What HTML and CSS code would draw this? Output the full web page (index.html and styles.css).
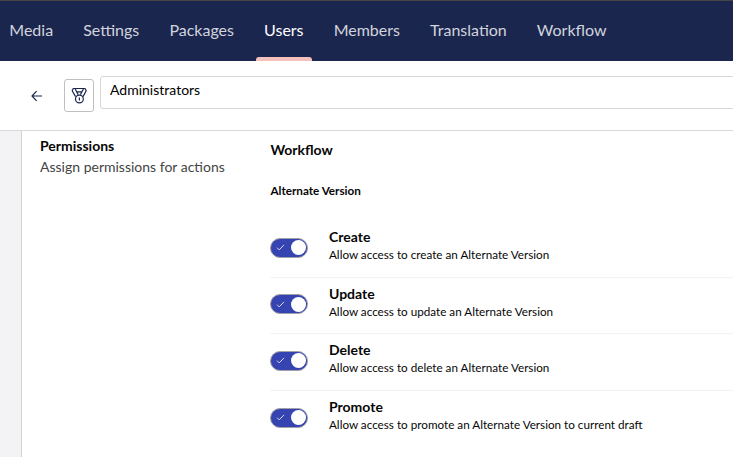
FILE: index.html
```html
<!DOCTYPE html>
<html lang="en">
<head>
<meta charset="utf-8">
<title>Administrators</title>
<link rel="stylesheet" href="styles.css">
</head>
<body>
<nav class="topbar">
  <a class="tab">Media</a>
  <a class="tab">Settings</a>
  <a class="tab">Packages</a>
  <a class="tab active">Users</a>
  <a class="tab">Members</a>
  <a class="tab">Translation</a>
  <a class="tab">Workflow</a>
</nav>
<header class="editor-head">
  <svg class="back" viewBox="0 0 12 12"><path d="M11 6H1.2M5.6 1.2L1 6l4.6 4.8"/></svg>
  <div class="icon-box">
    <svg class="medal" viewBox="0 0 16 18"><path d="M2.2 1.5H14L15.2 3.8 12 9.6M2.2 1.5L1.2 3.8 4.6 9.6M4.2 2l3 5.6M12.4 2L9.4 7.6M5.6 4.8h5.4"/><circle cx="8.4" cy="12" r="3.9"/><path d="M8.4 10.6v2.8"/></svg>
  </div>
  <div class="name-field">Administrators</div>
</header>
<main class="workspace">
  <section class="panel">
    <div class="intro">
      <h2>Permissions</h2>
      <p>Assign permissions for actions</p>
    </div>
    <div class="settings">
      <h3>Workflow</h3>
      <h4>Alternate Version</h4>
      <div class="row">
        <div class="toggle"><svg viewBox="0 0 10 8"><path d="M1 4.2l2.5 2.5L9 1"/></svg><i></i></div>
        <div class="label"><b>Create</b><span>Allow access to create an Alternate Version</span></div>
      </div>
      <div class="row">
        <div class="toggle"><svg viewBox="0 0 10 8"><path d="M1 4.2l2.5 2.5L9 1"/></svg><i></i></div>
        <div class="label"><b>Update</b><span>Allow access to update an Alternate Version</span></div>
      </div>
      <div class="row">
        <div class="toggle"><svg viewBox="0 0 10 8"><path d="M1 4.2l2.5 2.5L9 1"/></svg><i></i></div>
        <div class="label"><b>Delete</b><span>Allow access to delete an Alternate Version</span></div>
      </div>
      <div class="row">
        <div class="toggle"><svg viewBox="0 0 10 8"><path d="M1 4.2l2.5 2.5L9 1"/></svg><i></i></div>
        <div class="label"><b>Promote</b><span>Allow access to promote an Alternate Version to current draft</span></div>
      </div>
    </div>
  </section>
</main>
</body>
</html>
```
FILE: styles.css
```css
* { box-sizing: border-box; }
body {
  margin: 0;
  height: 457px;
  overflow: hidden;
  display: flex;
  flex-direction: column;
  font-family: Lato, "Liberation Sans", sans-serif;
  color: #060606;
  background: #f3f3f5;
}
h2, h3, h4, p { margin: 0; }

.topbar {
  height: 61px;
  flex: none;
  display: flex;
  padding-left: 1.3px;
  background: #1b264f;
  border-top: 1px solid #454545;
}
.tab {
  position: relative;
  height: 60px;
  padding: 0 8px;
  margin-right: 14.1px;
  font-size: 16px;
  line-height: 58px;
  color: #d1d4dc;
}
.tab.active { color: #fff; }
.tab.active::after {
  content: "";
  position: absolute;
  left: 0;
  right: 0;
  bottom: 0;
  height: 4px;
  border-radius: 3px 3px 0 0;
  background: #f5c1bc;
}

.editor-head {
  height: 70px;
  flex: none;
  display: flex;
  align-items: flex-start;
  padding: 15px 0 0 31px;
  background: #fff;
  border-bottom: 1px solid #d8d7d9;
}
.back { width: 12px; height: 12px; margin-top: 14px; }
.back path, .medal path, .medal circle {
  fill: none;
  stroke: #1b264f;
  stroke-width: 1.2;
}
.icon-box {
  width: 30px;
  height: 33px;
  margin: 3px 6px 0 21px;
  display: flex;
  align-items: center;
  justify-content: center;
  border: 1px solid #c0c0c0;
  border-radius: 3px;
}
.medal { width: 16px; height: 18px; }
.name-field {
  flex: 1;
  height: 33px;
  margin-right: -5px;
  padding-left: 9px;
  font-size: 14px;
  line-height: 26px;
  color: #000;
  border: 1px solid #d8d7d9;
  border-radius: 3px;
}

.workspace { flex: 1; padding-left: 21px; }
.panel {
  height: 100%;
  display: flex;
  padding-left: 18px;
  background: #fff;
  border-left: 1px solid #d3d3d6;
}
.intro { width: 230.4px; padding-top: 5px; }
.intro h2 { font-size: 14px; line-height: 19px; }
.intro p { margin-top: 2px; font-size: 14px; line-height: 19px; color: #444; white-space: nowrap; }

.settings { flex: 1; padding-top: 9px; }
.settings h3 { font-size: 14px; line-height: 19px; }
.settings h4 { margin-top: 22px; font-size: 11.7px; line-height: 18px; }
.row {
  height: 56.6px;
  display: flex;
  align-items: center;
  padding-bottom: 2px;
  border-bottom: 1px solid #f3f3f5;
}
.settings h4 + .row { margin-top: 22px; }
.row:last-child { height: 55.6px; border-bottom: 0; }
.toggle {
  width: 38px;
  height: 20px;
  margin-right: 20.6px;
  display: flex;
  align-items: center;
  justify-content: space-between;
  padding: 0 1.5px 0 5px;
  border: 1px solid #a2a1a6;
  border-radius: 10px;
  background: #3544b1;
}
.toggle svg { width: 9px; height: 7px; }
.toggle path { fill: none; stroke: #e0e2f5; stroke-width: 1.1; }
.toggle i { width: 15px; height: 15px; border-radius: 50%; background: #fff; }
.label { display: flex; flex-direction: column; padding-bottom: 4px; white-space: nowrap; }
.label b { font-size: 14px; line-height: 18px; }
.label span { font-size: 11.7px; line-height: 17px; }
```
